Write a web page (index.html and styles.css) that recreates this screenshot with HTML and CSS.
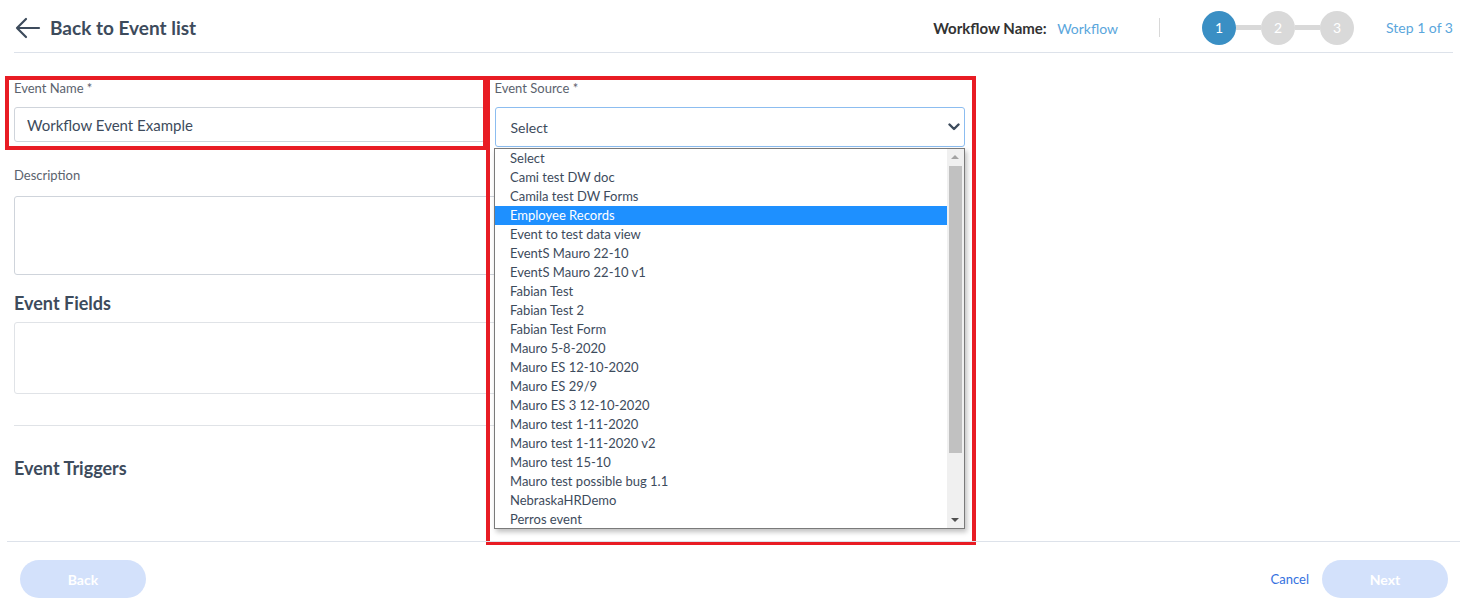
FILE: index.html
```html
<!DOCTYPE html>
<html lang="en">

<head>
	<meta charset="utf-8" />
	<title>Workflow Event</title>
	<link rel="stylesheet" href="styles.css">
</head>

<body>
	<div class="page">
		<header class="top-bar">
			<a class="back-link" href="#">
				<svg class="back-arrow" width="26" height="22" viewBox="0 0 26 22">
					<path d="M24 11H2M11 2L2 11l9 9" fill="none" stroke="#3d4b5c" stroke-width="2.2" stroke-linecap="round" stroke-linejoin="round"/>
				</svg>
				Back to Event list
			</a>
			<div class="workflow-info">
				<span class="wf-label">Workflow Name:</span>
				<span class="wf-value">Workflow</span>
			</div>
			<div class="divider-v"></div>
			<div class="steps">
				<span class="step active">1</span>
				<span class="step-line"></span>
				<span class="step">2</span>
				<span class="step-line"></span>
				<span class="step">3</span>
			</div>
			<div class="step-text">Step 1 of 3</div>
		</header>

		<div class="form">
			<div class="row">
				<div class="field">
					<label>Event Name *</label>
					<input type="text" class="text-input" value="Workflow Event Example">
				</div>
				<div class="field">
					<label>Event Source *</label>
					<div class="select-box">
						<span>Select</span>
						<svg class="chevron" width="12" height="8" viewBox="0 0 12 8">
							<path d="M1.5 1.5L6 6l4.5-4.5" fill="none" stroke="#3d4b5c" stroke-width="2.4" stroke-linecap="round" stroke-linejoin="round"/>
						</svg>
					</div>
				</div>
			</div>

			<label class="desc-label">Description</label>
			<textarea class="desc-area"></textarea>

			<h3 class="section-title">Event Fields</h3>
			<div class="fields-box"></div>

			<hr class="divider">

			<h3 class="section-title triggers">Event Triggers</h3>

			<div class="dropdown">
				<ul class="options">
					<li>Select</li>
					<li>Cami test DW doc</li>
					<li>Camila test DW Forms</li>
					<li class="selected">Employee Records</li>
					<li>Event to test data view</li>
					<li>EventS Mauro 22-10</li>
					<li>EventS Mauro 22-10 v1</li>
					<li>Fabian Test</li>
					<li>Fabian Test 2</li>
					<li>Fabian Test Form</li>
					<li>Mauro 5-8-2020</li>
					<li>Mauro ES 12-10-2020</li>
					<li>Mauro ES 29/9</li>
					<li>Mauro ES 3 12-10-2020</li>
					<li>Mauro test 1-11-2020</li>
					<li>Mauro test 1-11-2020 v2</li>
					<li>Mauro test 15-10</li>
					<li>Mauro test possible bug 1.1</li>
					<li>NebraskaHRDemo</li>
					<li>Perros event</li>
				</ul>
				<div class="scrollbar">
					<span class="arrow-up"></span>
					<span class="thumb"></span>
					<span class="arrow-down"></span>
				</div>
			</div>

			<div class="mark mark-name"></div>
			<div class="mark mark-source"></div>
		</div>

		<footer class="bottom-bar">
			<button class="pill">Back</button>
			<div class="bottom-right">
				<a class="cancel" href="#">Cancel</a>
				<button class="pill">Next</button>
			</div>
		</footer>
	</div>
</body>

</html>
```

FILE: styles.css
```css
body {
	margin: 0;
	font-family: "Source Sans Pro", Lato, "Liberation Sans", sans-serif;
	color: #3d4b5c;
	background: #fff;
}

.page {
	width: 1470px;
	height: 610px;
	position: relative;
}

.top-bar {
	display: flex;
	align-items: center;
	height: 53px;
	margin: 0 17px 0 14px;
	border-bottom: 1px solid #dde2ea;
	box-sizing: border-box;
	padding-top: 3px;
}

.back-link {
	display: flex;
	align-items: center;
	gap: 9px;
	font-size: 19px;
	font-weight: 700;
	color: #3d4b5c;
	text-decoration: none;
	margin-right: auto;
}

.back-arrow {
	margin-left: 1px;
}

.workflow-info {
	font-size: 14px;
}

.wf-label {
	font-size: 15px;
	font-weight: 700;
	color: #333;
	margin-right: 7px;
}

.wf-value {
	color: #5aa6dc;
}

.divider-v {
	width: 1px;
	height: 19px;
	background: #d8d8d8;
	margin: 0 42px 0 41px;
}

.steps {
	display: flex;
	align-items: center;
}

.step {
	width: 34px;
	height: 34px;
	border-radius: 50%;
	background: #d9d9d9;
	color: #fff;
	font-size: 14px;
	display: flex;
	align-items: center;
	justify-content: center;
}

.step.active {
	background: #3a8fc4;
}

.step-line {
	width: 25px;
	height: 5px;
	background: #d9d9d9;
}

.step-text {
	margin-left: 32px;
	font-size: 14px;
	color: #5aa6dc;
}

.form {
	position: relative;
	width: 951px;
	margin: 27px 0 0 14px;
	display: flex;
	flex-direction: column;
}

.row {
	display: flex;
	gap: 10px;
}

.field {
	flex: 1;
	display: flex;
	flex-direction: column;
}

label {
	font-size: 13px;
	color: #5b636e;
	height: 16px;
	line-height: 16px;
	margin-bottom: 11px;
}

.text-input {
	height: 35px;
	box-sizing: border-box;
	border: 1px solid #cfd4db;
	border-radius: 3px;
	padding: 0 12px;
	font-family: inherit;
	font-size: 15px;
	color: #3d4b5c;
	margin: 0;
}

.select-box {
	height: 40px;
	box-sizing: border-box;
	border: 1px solid #8cbdf0;
	border-radius: 3px;
	padding: 0 4px 0 15px;
	display: flex;
	align-items: center;
	justify-content: space-between;
	font-size: 14px;
	color: #3d4b5c;
}

.desc-label {
	margin-top: 20px;
	margin-bottom: 13px;
}

.desc-area {
	height: 79px;
	box-sizing: border-box;
	border: 1px solid #cfd4db;
	border-radius: 3px;
	resize: none;
	margin: 0;
}

.section-title {
	font-size: 18px;
	font-weight: 700;
	color: #3d4b5c;
	margin: 17px 0 8px;
	line-height: 22px;
}

.fields-box {
	height: 72px;
	box-sizing: border-box;
	border: 1px solid #e0e3e7;
	border-radius: 3px;
}

.divider {
	border: 0;
	border-top: 1px solid #e0e3e7;
	margin: 31px 0 0;
}

.section-title.triggers {
	margin-top: 31px;
}

.dropdown {
	position: absolute;
	left: 480px;
	top: 68px;
	width: 471px;
	height: 381px;
	box-sizing: border-box;
	border: 1px solid #7a7a7a;
	background: #fff;
	box-shadow: 2px 3px 5px rgba(0, 0, 0, 0.25);
	display: flex;
}

.options {
	list-style: none;
	margin: 0;
	padding: 0;
	flex: 1;
}

.options li {
	height: 19px;
	line-height: 19px;
	font-size: 13px;
	padding-left: 15px;
	color: #3d4b5c;
}

.options li.selected {
	background: #1e90ff;
	color: #fff;
}

.scrollbar {
	width: 17px;
	background: #f0f0f0;
	position: relative;
}

.thumb {
	position: absolute;
	left: 2px;
	right: 2px;
	top: 17px;
	height: 287px;
	background: #c1c1c1;
}

.arrow-up,
.arrow-down {
	position: absolute;
	left: 4px;
	width: 0;
	height: 0;
	border-left: 4px solid transparent;
	border-right: 4px solid transparent;
}

.arrow-up {
	top: 6px;
	border-bottom: 4px solid #a3a3a3;
}

.arrow-down {
	bottom: 6px;
	border-top: 4px solid #505050;
}

.mark {
	position: absolute;
	border: 4px solid #e81c24;
	pointer-events: none;
}

.mark-name {
	left: -9px;
	top: -4px;
	width: 474px;
	height: 66px;
}

.mark-source {
	left: 472px;
	top: -4px;
	width: 482px;
	height: 461px;
}

.bottom-bar {
	position: absolute;
	left: 7px;
	right: 10px;
	top: 541px;
	border-top: 1px solid #dde2ea;
	display: flex;
	justify-content: space-between;
	align-items: center;
	padding: 18px 12px 0 13px;
}

.bottom-right {
	display: flex;
	align-items: center;
	gap: 13px;
}

.pill {
	width: 126px;
	height: 38px;
	border: 0;
	border-radius: 19px;
	background: #d3e1fb;
	color: #fff;
	font-family: inherit;
	font-size: 14px;
	font-weight: 700;
}

.cancel {
	font-size: 13px;
	color: #3571e0;
	text-decoration: none;
}
```
